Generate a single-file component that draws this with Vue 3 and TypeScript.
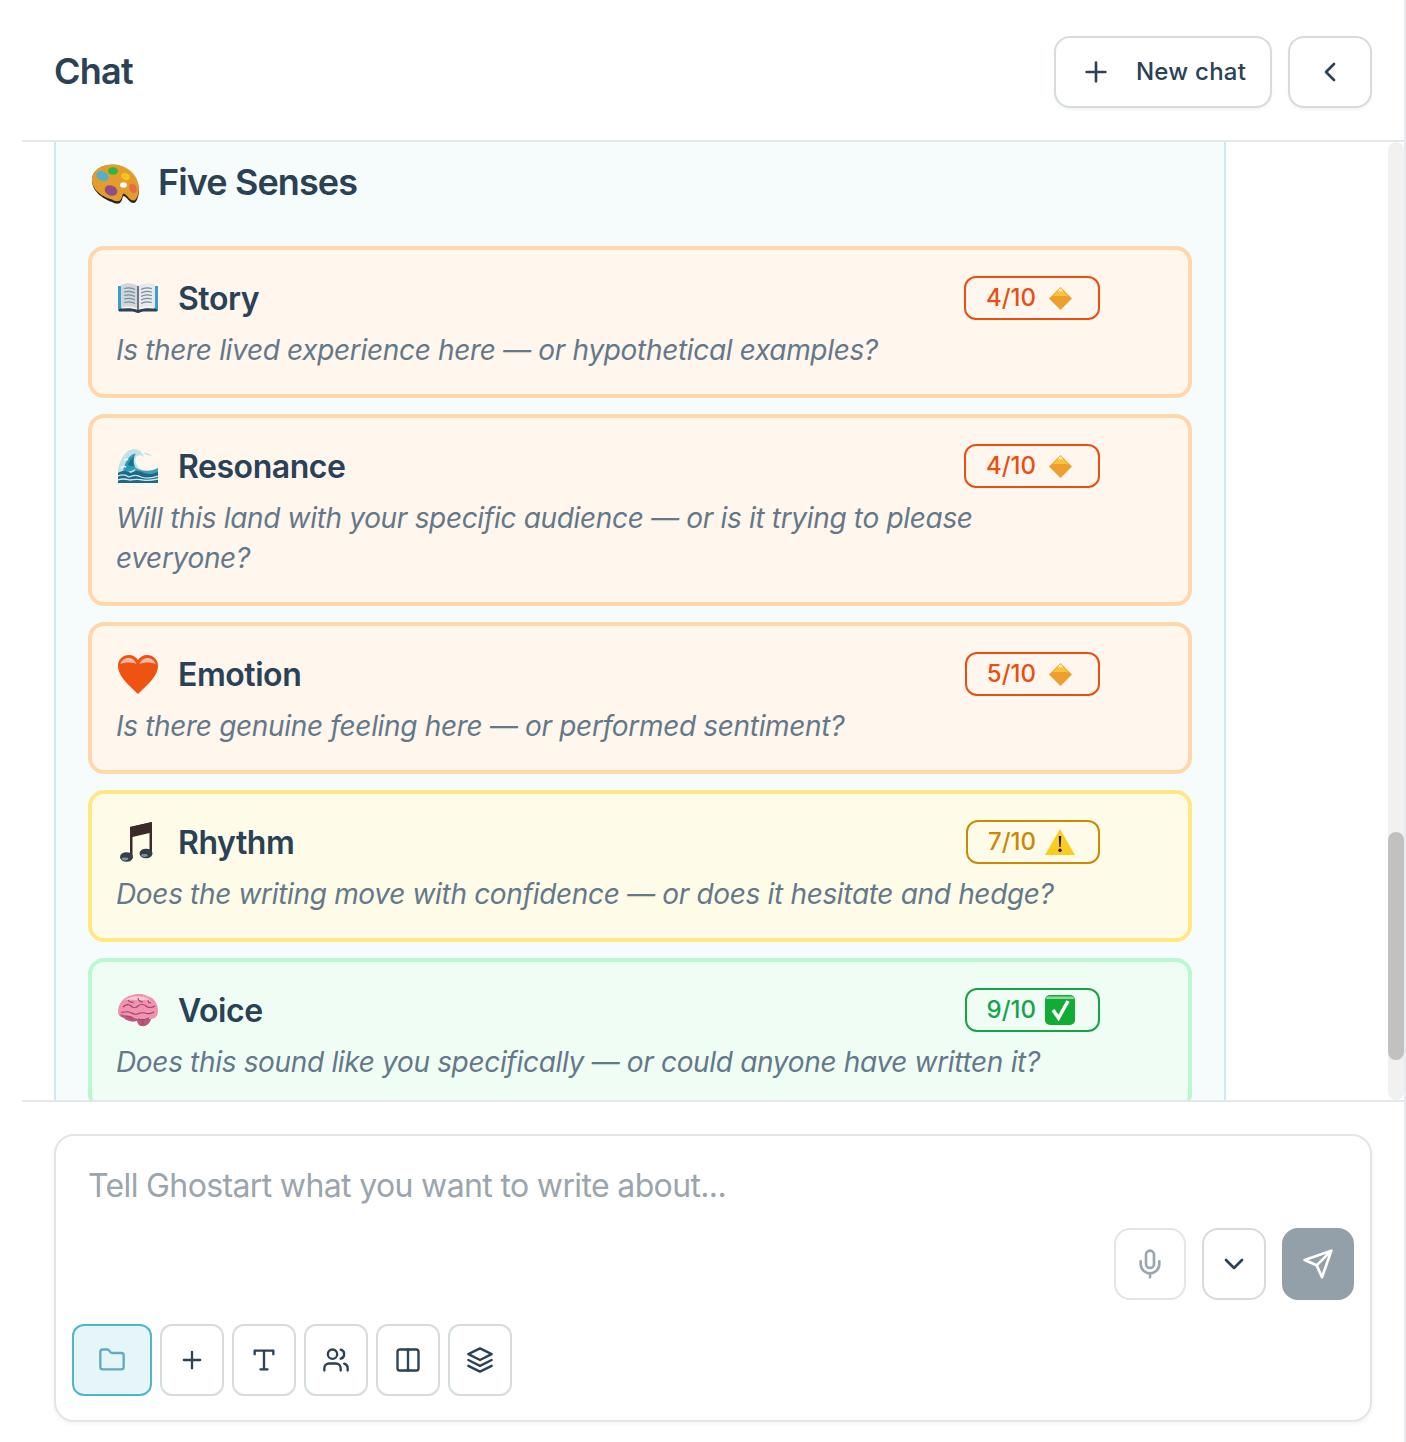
<script setup lang="ts">
type Tone = 'orange' | 'yellow' | 'green'
interface Sense {
  name: string
  emoji: 'book' | 'wave' | 'heart' | 'music' | 'brain'
  score: string
  tone: Tone
  question: string
}
const senses: Sense[] = [
  { name: 'Story', emoji: 'book', score: '4/10', tone: 'orange', question: 'Is there lived experience here — or hypothetical examples?' },
  { name: 'Resonance', emoji: 'wave', score: '4/10', tone: 'orange', question: 'Will this land with your specific audience — or is it trying to please everyone?' },
  { name: 'Emotion', emoji: 'heart', score: '5/10', tone: 'orange', question: 'Is there genuine feeling here — or performed sentiment?' },
  { name: 'Rhythm', emoji: 'music', score: '7/10', tone: 'yellow', question: 'Does the writing move with confidence — or does it hesitate and hedge?' },
  { name: 'Voice', emoji: 'brain', score: '9/10', tone: 'green', question: 'Does this sound like you specifically — or could anyone have written it?' }
]
</script>

<template>
  <div class="page">
    <header class="top">
      <h1 class="chat-title">Chat</h1>
      <div class="top-actions">
        <button class="btn new-chat">
          <svg class="i32" viewBox="0 0 24 24"><path d="M5 12h14M12 5v14" /></svg>
          <span>New chat</span>
        </button>
        <button class="btn back">
          <svg class="i32" viewBox="0 0 24 24"><path d="m15 18-6-6 6-6" /></svg>
        </button>
      </div>
    </header>

    <main class="messages">
      <section class="panel">
        <div class="panel-head">
          <svg class="palette" viewBox="0 0 48 40">
            <path d="M1 15C2 5 13 0 24 1c12 1 23 11 24 24 0 7-2 13-5 14-5 0-6-5-10-7-2 0-1 4-4 7-2 1-5 1-8-1C12 35 0 27 1 15Z" fill="#2b2320" />
            <path d="M1 14C2 5 13-.5 24 .5c12 1 23 10 24 23 0 6-2 12-5 13-5 0-6-5-10-7-2 0-1 4-4 7-2 1-5 1-8-1C12 33 0 26 1 14Z" fill="#e39c2d" />
            <ellipse cx="11.500" cy="12" rx="6.500" ry="4.600" fill="#4fb0d0" transform="rotate(28 11.500 12)" />
            <ellipse cx="22" cy="7" rx="5" ry="3.800" fill="#2fb544" />
            <ellipse cx="34.500" cy="12.500" rx="4.500" ry="3.200" fill="#f7c51e" transform="rotate(25 34.500 12.500)" />
            <ellipse cx="20" cy="26.500" rx="6.500" ry="5" fill="#8f4f86" transform="rotate(20 20 26.500)" />
            <ellipse cx="42" cy="24.500" rx="3.600" ry="5" fill="#ec6a45" transform="rotate(-25 42 24.500)" />
            <ellipse cx="32.500" cy="21" rx="3.500" ry="2.800" fill="#f8fbfc" />
          </svg>
          <h2 class="panel-title">Five Senses</h2>
        </div>

        <div class="rows">
          <article v-for="s in senses" :key="s.name" class="row" :class="s.tone">
            <div class="row-head">
              <div class="row-name">
                <span class="emoji">
                  <svg v-if="s.emoji === 'book'" class="e-book" viewBox="0 0 40 30">
                    <path d="M0 3h4v23h12l4 2 4-2h12V3h4v25H25l-5 2-5-2H0Z" fill="#3f9cc4" />
                    <path d="M3 2c5-2.500 12-2.500 17 1v23c-5-3-12-3-17-1Z" fill="#cfd6dc" />
                    <path d="M37 2c-5-2.500-12-2.500-17 1v23c5-3 12-3 17-1Z" fill="#e6eaee" />
                    <path d="M6 5.500c4-1 8-1 11 1M6 9c4-1 8-1 11 1M6 12.500c4-1 8-1 11 1M6 16c4-1 8-1 11 1M6 19.500c4-1 8-1 11 1M34 5.500c-4-1-8-1-11 1M34 9c-4-1-8-1-11 1M34 12.500c-4-1-8-1-11 1M34 16c-4-1-8-1-11 1M34 19.500c-4-1-8-1-11 1" stroke="#7f8d99" stroke-width="1.100" fill="none" />
                    <path d="M20 3v24" stroke="#4d5a64" stroke-width="1.600" />
                    <path d="M1 26c6-1 14-1 19 1 5-2 13-2 19-1v2.500H25l-5 1.500-5-1.500H1Z" fill="#2b4258" />
                  </svg>
                  <svg v-else-if="s.emoji === 'wave'" class="e-wave" viewBox="0 0 40 34">
                    <path d="M0 34V21C2 10 7 2 14 .5 19-.5 24 2 26 8c-3-2-5-2-7-1-3 3-2 8 2 12 5 3 12 3 19 0v15Z" fill="#c4e0e7" />
                    <path d="M5 23C7 12 12 5 18 4.500c-3 4-3 10 0 15-3 2-9 4-13 3.500Z" fill="#2b9ab8" />
                    <path d="M10 16c1-4 3-6 6-8-1 3-1 6 0 9-2 0-5 0-6-1Z" fill="#17708f" />
                    <path d="M18 19c6 4 15 4 22 0v8H14Z" fill="#3f9cbb" />
                    <path d="M0 24c5-3 9-2 13 0 5-3 9-2 13 0 5 2 9 1 14-1v11H0Z" fill="#1d6a87" />
                    <path d="M0 27c4-2 8-1 11 1 4-2 9-2 12 0 5 2 11 1 17-1M0 31c5-2 8-1 12 0 5-1 9-1 13 0 5 1 10 0 15-1" stroke="#d3e8ed" stroke-width="1.300" fill="none" />
                    <path d="M3 19c2-2 3-2 5-1M6 11c2-1 3-1 4 0M28 6c2-1 3 0 5 2M30 2c1 0 3 1 4 2" stroke="#f4fafb" stroke-width="1.500" fill="none" />
                    <path d="M25 4c3-1 6 0 9 3-3 0-6-1-9-3Z" fill="#cfe4ea" />
                  </svg>
                  <svg v-else-if="s.emoji === 'heart'" class="e-heart" viewBox="0 0 40 39">
                    <path d="M20 39C13 32 0 22 0 11 0 4 5 0 11 0c4 0 7 2 9 5 2-3 5-5 9-5 6 0 11 4 11 11 0 11-13 21-20 28Z" fill="#ef5311" />
                    <path d="M2.500 9c1-4 5-6.500 9-6 3 .5 5.500 2 7 6-5-2-11-2-16 0ZM21.500 9c1.500-4 4-5.500 7-6 4-.5 8 2 9 6-5-2-11-2-16 0Z" fill="#f8b9a4" />
                  </svg>
                  <svg v-else-if="s.emoji === 'music'" class="e-music" viewBox="0 0 33 40">
                    <path d="M10 5 32 0v31h-2.500V11L12.500 15v21H10Z" fill="#3a2a2a" />
                    <path d="M10 5 32 0v8L10 13Z" fill="#3a2a2a" />
                    <ellipse cx="6.500" cy="35" rx="6.500" ry="4.800" fill="#33404a" />
                    <ellipse cx="26" cy="31.500" rx="6.500" ry="4.800" fill="#33404a" />
                    <ellipse cx="5" cy="37" rx="3.300" ry="1.400" fill="#7f93a1" />
                    <ellipse cx="24.500" cy="33.500" rx="3.300" ry="1.400" fill="#7f93a1" />
                  </svg>
                  <svg v-else class="e-brain" viewBox="0 0 40 33">
                    <path d="M0 18C0 9 6 3 13 1.500c6-2.500 12-2 16 .5 7 1 11 8 11 15 0 5-3 8-7 8-1 4-5 8-9 7-3 0-4-2-5-5-5 1-10 0-13-3C3 23 0 22 0 18Z" fill="#ee93b0" />
                    <path d="M7 6c4-3 10-4.500 15-3.500 5 0 9 2 11 5-5-1.500-8-2-11-1-5-1-10-1-15-.5Z" fill="#f9c8d5" />
                    <path d="M2 20c5 2 10 1 14 4 5 2 11 1 17 1-1 4-5 8-9 7-3 0-4-2-5-5-5 1-10 0-13-3-2-.5-3.500-2-4-4Z" fill="#b65a80" />
                    <path d="M5 13c3-3 6-3 8-1s5 2 7 0 6-2 8 0 6 2 9 0M3 18c3 1 5-1 8 0s5 3 8 2 5-2 8-1 6 1 9-1M10 6c1 2 3 3 6 2M20 4c0 2 2 4 5 4M30 6c0 2 1 3 3 3M8 22c3 0 5 1 7 2M20 25c3 1 7 1 11-1M24 26c1 2 1 4 0 5" stroke="#a83f68" stroke-width="1.100" fill="none" />
                  </svg>
                </span>
                <h3 class="name">{{ s.name }}</h3>
              </div>
              <span class="badge">
                <span>{{ s.score }}</span>
                <span class="badge-emoji">
                  <svg v-if="s.tone === 'orange'" class="e-diamond" viewBox="0 0 24 24">
                    <path d="M12 0 24 12 12 24 0 12Z" fill="#eda02e" />
                    <path d="M12 1 20 9.500H4Z" fill="#f7c43a" />
                    <path d="M12 1 15 4.500H9Z" fill="#fbe7b8" />
                  </svg>
                  <svg v-else-if="s.tone === 'yellow'" class="e-warn" viewBox="0 0 30 26">
                    <path d="M15 0 30 26H0Z" fill="#fdcb20" />
                    <path d="M13.800 7h2.400l-.5 11h-1.400Z" fill="#2a2018" />
                    <circle cx="15" cy="21.300" r="1.700" fill="#2a2018" />
                  </svg>
                  <svg v-else class="e-check" viewBox="0 0 30 30">
                    <rect width="30" height="30" rx="5" fill="#12ab35" />
                    <path d="M3 1.500h24A2.500 2.500 0 0 1 29 4H1a2.500 2.500 0 0 1 2-2.500Z" fill="#8fd9a0" />
                    <path d="m8 15 5.500 8L23 6" stroke="#fff" stroke-width="3.500" fill="none" />
                  </svg>
                </span>
              </span>
            </div>
            <p class="question">{{ s.question }}</p>
          </article>
        </div>
      </section>
      <div class="track"><div class="thumb"></div></div>
    </main>

    <footer class="bottom">
      <div class="composer">
        <div class="placeholder">Tell Ghostart what you want to write about...</div>
        <div class="send-row">
          <button class="btn sq mic">
            <svg class="i32" viewBox="0 0 24 24">
              <path d="M12 2a3 3 0 0 0-3 3v7a3 3 0 0 0 6 0V5a3 3 0 0 0-3-3Z" />
              <path d="M19 10v2a7 7 0 0 1-14 0v-2M12 19v3" />
            </svg>
          </button>
          <button class="btn sq more">
            <svg class="i32" viewBox="0 0 24 24"><path d="m6 9 6 6 6-6" /></svg>
          </button>
          <button class="btn sq send">
            <svg class="i32" viewBox="0 0 24 24"><path d="M22 2 15 22l-4-9-9-4ZM22 2 11 13" /></svg>
          </button>
        </div>
        <div class="tools">
          <button class="btn tool folder">
            <svg class="i28" viewBox="0 0 24 24"><path d="M20 20a2 2 0 0 0 2-2V8a2 2 0 0 0-2-2h-7.900a2 2 0 0 1-1.690-.9L9.600 3.900A2 2 0 0 0 7.930 3H4a2 2 0 0 0-2 2v13a2 2 0 0 0 2 2Z" /></svg>
          </button>
          <button class="btn tool">
            <svg class="i28" viewBox="0 0 24 24"><path d="M5 12h14M12 5v14" /></svg>
          </button>
          <button class="btn tool">
            <svg class="i28" viewBox="0 0 24 24"><path d="M4 7V4h16v3M9 20h6M12 4v16" /></svg>
          </button>
          <button class="btn tool">
            <svg class="i28" viewBox="0 0 24 24">
              <path d="M16 21v-2a4 4 0 0 0-4-4H6a4 4 0 0 0-4 4v2" />
              <circle cx="9" cy="7" r="4" />
              <path d="M22 21v-2a4 4 0 0 0-3-3.870M16 3.130a4 4 0 0 1 0 7.750" />
            </svg>
          </button>
          <button class="btn tool">
            <svg class="i28" viewBox="0 0 24 24">
              <rect x="3" y="3" width="18" height="18" rx="2" />
              <path d="M12 3v18" />
            </svg>
          </button>
          <button class="btn tool">
            <svg class="i28" viewBox="0 0 24 24">
              <path d="m12 2 10 5-10 5L2 7Z" />
              <path d="m2 12 10 5 10-5M2 17l10 5 10-5" />
            </svg>
          </button>
        </div>
      </div>
    </footer>
  </div>
</template>

<style scoped>
.page {
  box-sizing: border-box;
  width: 1406px;
  height: 1442px;
  padding-left: 22px;
  border-right: 2px solid #e9ecee;
  display: flex;
  flex-direction: column;
  background: #fff;
  color: #2a4156;
  font-family: Inter, "Liberation Sans", sans-serif;
  overflow: hidden;
}
.top {
  box-sizing: border-box;
  height: 142px;
  flex: none;
  padding: 4px 32px 0;
  border-bottom: 2px solid #e3e8eb;
  display: flex;
  align-items: center;
  justify-content: space-between;
}
.chat-title {
  margin: 0 0 2px;
  font-size: 36px;
  font-weight: 600;
  line-height: 44px;
  letter-spacing: -0.75px;
}
.top-actions {
  display: flex;
  gap: 16px;
}
.btn {
  box-sizing: border-box;
  display: flex;
  align-items: center;
  justify-content: center;
  padding: 0;
  background: #fff;
  border: 2px solid #d5dbdf;
  border-radius: 16px;
  color: #2a4156;
  font-family: inherit;
}
.new-chat {
  width: 218px;
  height: 72px;
  gap: 24px;
  font-size: 24px;
  font-weight: 500;
  letter-spacing: 0.25px;
  box-shadow: 0 2px 3px rgba(30, 50, 70, 0.05);
}
.new-chat span {
  margin-top: -2px;
}
.back {
  width: 84px;
  height: 72px;
  box-shadow: 0 2px 3px rgba(30, 50, 70, 0.05);
}
svg {
  display: block;
  flex: none;
}
.i32,
.i28 {
  fill: none;
  stroke: currentColor;
  stroke-width: 2;
  stroke-linecap: round;
  stroke-linejoin: round;
}
.i32 {
  width: 32px;
  height: 32px;
}
.i28 {
  width: 28px;
  height: 28px;
}
.messages {
  position: relative;
  flex: 1;
  min-height: 0;
  overflow: hidden;
  padding: 0 32px;
}
.panel {
  box-sizing: border-box;
  width: 1172px;
  padding: 0 32px 32px;
  background: #f6fbfc;
  border: 2px solid #cde8ee;
  border-top: none;
}
.panel-head {
  height: 80px;
  margin-bottom: 24px;
  display: flex;
  align-items: center;
  gap: 19px;
  padding-left: 3px;
}
.palette {
  width: 48px;
  height: 40px;
  margin-top: 3px;
}
.panel-title {
  margin: 0;
  font-size: 36px;
  font-weight: 600;
  line-height: 44px;
  letter-spacing: -0.9px;
}
.rows {
  display: flex;
  flex-direction: column;
  gap: 16px;
}
.row {
  box-sizing: border-box;
  width: 1104px;
  padding: 24px 88px 24px 24px;
  border: 4px solid;
  border-radius: 16px;
}
.row.orange {
  background: #fff6ed;
  border-color: #fed7aa;
  --tone: #ea4f10;
}
.row.yellow {
  background: #fefce8;
  border-color: #fde883;
  --tone: #ca8a04;
}
.row.green {
  background: #f0fdf4;
  border-color: #bbf7d0;
  --tone: #16a34a;
}
.row-head {
  height: 48px;
  display: flex;
  align-items: center;
  justify-content: space-between;
}
.row-name {
  display: flex;
  align-items: center;
  gap: 19px;
}
.emoji {
  width: 43px;
  display: flex;
  justify-content: center;
  padding-left: 1px;
  box-sizing: border-box;
}
.e-book { width: 40px; height: 30px; }
.e-wave { width: 40px; height: 34px; }
.e-heart { width: 40px; height: 39px; }
.e-music { width: 33px; height: 40px; margin-right: 4px; }
.e-brain { width: 40px; height: 33px; }
.name {
  margin: 0;
  padding-top: 2px;
  font-size: 32px;
  font-weight: 600;
  line-height: 48px;
  letter-spacing: -0.45px;
}
.badge {
  box-sizing: border-box;
  height: 44px;
  padding: 0 22px 0 20px;
  display: flex;
  align-items: center;
  gap: 8px;
  border: 2px solid var(--tone);
  border-radius: 12px;
  color: var(--tone);
  font-size: 24px;
  font-weight: 500;
}
.badge > span:first-child {
  margin-top: -1px;
}
.badge-emoji {
  width: 32px;
  display: flex;
  justify-content: center;
}
.e-diamond { width: 23px; height: 23px; margin-left: 1px; }
.e-warn { width: 30px; height: 26px; }
.e-check { width: 30px; height: 30px; }
.question {
  margin: 8px 0 0;
  font-size: 28px;
  font-style: italic;
  line-height: 40px;
  letter-spacing: -0.33px;
  color: #64788a;
}
.track {
  position: absolute;
  right: 0;
  top: 0;
  bottom: 0;
  width: 16px;
  background: #f1f1f1;
  border-radius: 8px;
}
.thumb {
  margin-top: 690px;
  height: 228px;
  background: #c1c1c1;
  border-radius: 8px;
}
.bottom {
  box-sizing: border-box;
  flex: none;
  height: 342px;
  padding: 32px 32px 20px;
  border-top: 2px solid #e3e8eb;
}
.composer {
  box-sizing: border-box;
  height: 288px;
  padding: 26px 16px 22px;
  border: 2px solid #e1e6e9;
  border-radius: 20px;
  box-shadow: 0 2px 4px rgba(30, 50, 70, 0.06);
}
.placeholder {
  height: 48px;
  padding-left: 16px;
  font-size: 32px;
  line-height: 48px;
  letter-spacing: -0.64px;
  color: #9aa5ad;
}
.send-row {
  margin-top: 18px;
  display: flex;
  justify-content: flex-end;
  gap: 16px;
}
.sq {
  width: 72px;
  height: 72px;
}
.mic {
  border-color: #e1e6e9;
  color: #9aa7ae;
}
.more {
  width: 64px;
}
.send {
  background: #94a0a9;
  border-color: #94a0a9;
  color: #fff;
}
.tools {
  margin-top: 24px;
  display: flex;
  gap: 8px;
}
.tool {
  width: 64px;
  height: 72px;
  border-radius: 12px;
}
.folder {
  width: 80px;
  background: #e6f5f7;
  border-color: #52b5ca;
  color: #62abc0;
}
</style>
